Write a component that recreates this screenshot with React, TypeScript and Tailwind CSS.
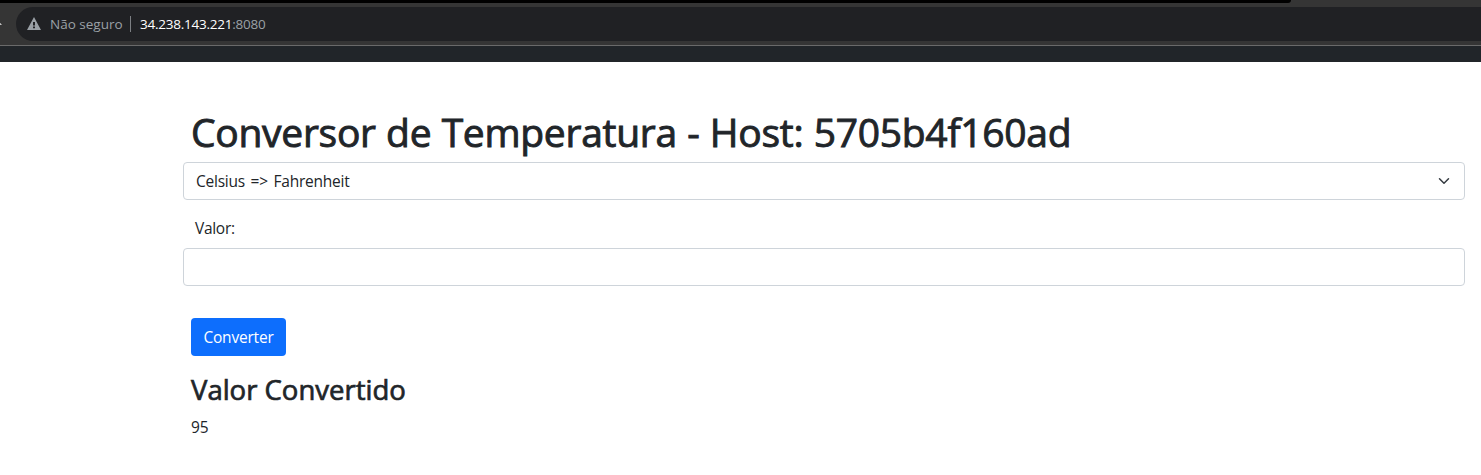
import React from "react";

function AddressBar() {
  return (
    <div className="h-[46px] border-b border-[#6a6a6a] bg-[#353535]">
      <div className="h-[3px] w-[1291px] rounded-br-[4px] bg-black" />
      <div className="flex pt-1">
        <svg className="h-[34px] w-4 shrink-0" viewBox="0 0 16 34">
          <path d="M-2 14L2 17.8H-2Z" fill="#f1f1f1" />
        </svg>
        <div className="flex h-[34px] flex-1 items-center rounded-l-full bg-[#202124] pl-[11px] text-[13.5px] leading-5">
          <svg className="mb-px h-[13px] w-[14px] shrink-0" viewBox="0 0 14 13">
            <path
              d="M7 0L14 13H0ZM6 5V8.5H8V5ZM6 9.5V11.2H8V9.5Z"
              fill="#9aa0a6"
              fillRule="evenodd"
            />
          </svg>
          <span className="ml-[9px] w-[80px] whitespace-nowrap text-[#9aa0a6]">
            Não seguro
          </span>
          <span className="h-4 w-px bg-[#7c7f83]" />
          <span className="ml-[9px] whitespace-nowrap tracking-[-0.24px] text-white">
            34.238.143.221<span className="text-[#9aa0a6]">:8080</span>
          </span>
        </div>
      </div>
    </div>
  );
}

export default function App() {
  return (
    <div className="h-[475px] overflow-hidden bg-white font-['Open_Sans','Noto_Sans',sans-serif] text-[15.5px] leading-6 text-[#212529]">
      <AddressBar />
      <div className="h-4 bg-[#212529]" />
      <main className="pl-[183px] pr-4 pt-[46px]">
        <h1 className="mb-[6px] whitespace-nowrap pl-2 text-[39px] font-normal leading-[48px] tracking-[-0.28px] [-webkit-text-stroke:0.9px_#212529] [word-spacing:0.5px]">
          Conversor de Temperatura - Host: 5705b4f160ad
        </h1>
        <button className="flex h-[38px] w-full items-center justify-between rounded border border-[#ced4da] pl-3 pr-3">
          <span className="tracking-[-0.25px] [word-spacing:2px]">Celsius =&gt; Fahrenheit</span>
          <svg className="h-3 w-4" viewBox="0 0 16 16" fill="none">
            <path
              d="m2 5 6 6 6-6"
              stroke="#343a40"
              strokeWidth="2"
              strokeLinecap="round"
              strokeLinejoin="round"
            />
          </svg>
        </button>
        <label htmlFor="valor" className="mt-4 block pb-2 pl-3 tracking-[-0.3px]">
          Valor:
        </label>
        <input id="valor" className="block h-[38px] w-full rounded border border-[#ced4da] px-3" />
        <div className="pl-2 pt-8">
          <button className="flex h-[38px] w-[95px] items-center justify-center rounded bg-[#0d6efd] tracking-[-0.2px] text-white">
            Converter
          </button>
          <h2 className="mb-2 mt-[17px] text-[27.5px] font-normal leading-[34px] [-webkit-text-stroke:0.7px_#212529]">
            Valor Convertido
          </h2>
          <p>95</p>
        </div>
      </main>
    </div>
  );
}
